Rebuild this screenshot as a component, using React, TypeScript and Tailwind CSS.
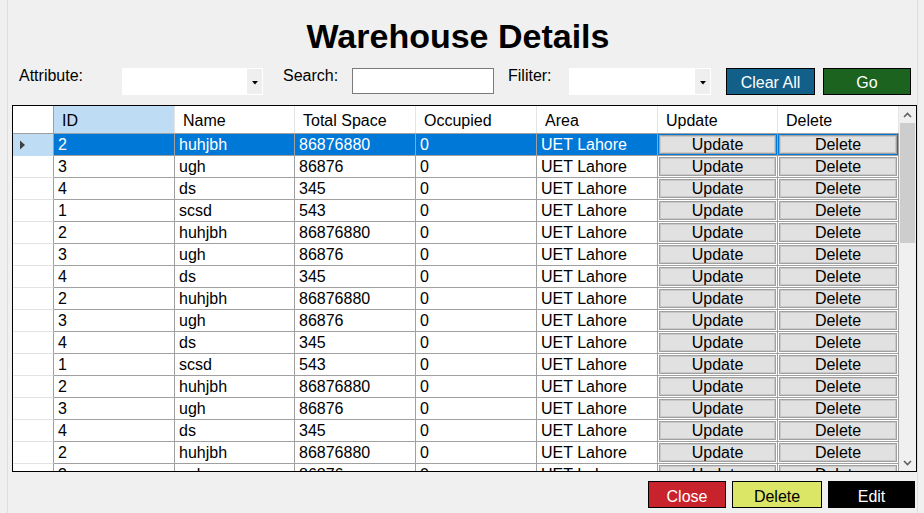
import React from "react";

const rows: [string, string, string][] = [
  ["2", "huhjbh", "86876880"],
  ["3", "ugh", "86876"],
  ["4", "ds", "345"],
  ["1", "scsd", "543"],
  ["2", "huhjbh", "86876880"],
  ["3", "ugh", "86876"],
  ["4", "ds", "345"],
  ["2", "huhjbh", "86876880"],
  ["3", "ugh", "86876"],
  ["4", "ds", "345"],
  ["1", "scsd", "543"],
  ["2", "huhjbh", "86876880"],
  ["3", "ugh", "86876"],
  ["4", "ds", "345"],
  ["2", "huhjbh", "86876880"],
  ["3", "ugh", "86876"],
];

const DropArrow = () => (
  <svg width="6" height="4" viewBox="0 0 6 4">
    <polygon points="0,0 6,0 3,3.5" fill="#000" />
  </svg>
);

const Combo = ({ w }: { w: string }) => (
  <div className={`${w} h-[27px] bg-white border border-white flex justify-end`}>
    <div className="w-[15px] h-full bg-[#efefef] flex items-center justify-center pt-[2px]">
      <DropArrow />
    </div>
  </div>
);

export default function App() {
  const dataCell = "border-r border-b border-[#a0a0a0] flex items-center pl-[4px] pt-[1px] whitespace-nowrap overflow-hidden";
  return (
    <div className="w-[924px] h-[513px] bg-[#f0f0f0] overflow-hidden text-black font-['Liberation_Sans',Arial,sans-serif] text-[16px]">
      <div className="ml-[7px] w-[911px] h-full border-x border-[#dedede] flex flex-col">
        {/* Title */}
        <div className="mt-[19px] h-[34px] leading-[34px] text-[34px] font-bold text-center pr-[9px] shrink-0">
          Warehouse Details
        </div>

        {/* Controls */}
        <div className="mt-[15px] flex h-[27px] items-start shrink-0">
          <div className="ml-[11px] w-[103px] leading-[14px] mt-[1px]">Attribute:</div>
          <Combo w="w-[141px]" />
          <div className="ml-[20px] w-[69px] leading-[14px] mt-[1px]">Search:</div>
          <div className="w-[142px] h-[26px] bg-white border border-[#7a7a7a]" />
          <div className="ml-[14px] w-[61px] leading-[14px] mt-[1px]">Filiter:</div>
          <Combo w="w-[142px]" />
          <div className="ml-[15px] w-[89px] h-[27px] bg-[#125f8a] border border-black text-white flex items-center justify-center pt-[3px]">
            Clear All
          </div>
          <div className="ml-[8px] w-[88px] h-[27px] bg-[#1b631e] border border-black text-white flex items-center justify-center pt-[3px]">
            Go
          </div>
        </div>

        {/* Grid */}
        <div className="mt-[10px] ml-[4px] w-[905px] h-[367px] border border-black bg-white flex overflow-hidden shrink-0">
          <div className="w-[886px] flex flex-col overflow-hidden">
            {/* Header */}
            <div className="flex h-[28px] shrink-0 border-b border-[#a0a0a0]">
              <div className="w-[41px] border-r border-[#a0a0a0] bg-white" />
              <div className="w-[121px] border-r border-[#e5e5e5] bg-[#bedcf4] flex items-center pl-[8px] pt-[3px]">ID</div>
              <div className="w-[120px] border-r border-[#e5e5e5] flex items-center pl-[8px] pt-[3px]">Name</div>
              <div className="w-[121px] border-r border-[#e5e5e5] flex items-center pl-[8px] pt-[3px]">Total Space</div>
              <div className="w-[121px] border-r border-[#e5e5e5] flex items-center pl-[8px] pt-[3px]">Occupied</div>
              <div className="w-[121px] border-r border-[#e5e5e5] flex items-center pl-[8px] pt-[3px]">Area</div>
              <div className="w-[120px] border-r border-[#e5e5e5] flex items-center pl-[8px] pt-[3px]">Update</div>
              <div className="w-[121px] border-r border-[#e5e5e5] flex items-center pl-[8px] pt-[3px]">Delete</div>
            </div>
            {/* Rows */}
            {rows.map((r, i) => {
              const sel = i === 0;
              const bg = sel ? "bg-[#0078d7] text-white" : "bg-white";
              return (
                <div key={i} className="flex h-[22px] shrink-0">
                  <div className={`w-[41px] border-r border-[#a0a0a0] border-b ${sel ? "bg-[#bedcf4] border-b-[#bedcf4]" : "bg-white border-b-[#e3e3e3]"} flex items-center pl-[7px]`}>
                    {sel && (
                      <svg width="6" height="10" viewBox="0 0 6 10">
                        <polygon points="0,0.5 5,5 0,9.5" fill="#404040" />
                      </svg>
                    )}
                  </div>
                  <div className={`w-[121px] ${dataCell} ${bg}`}>{r[0]}</div>
                  <div className={`w-[120px] ${dataCell} ${bg}`}>{r[1]}</div>
                  <div className={`w-[121px] ${dataCell} ${bg}`}>{r[2]}</div>
                  <div className={`w-[121px] ${dataCell} ${bg}`}>0</div>
                  <div className={`w-[121px] ${dataCell} ${bg}`}>UET Lahore</div>
                  <div className={`w-[120px] border-r border-b border-[#a0a0a0] p-[1px] ${sel ? "bg-[#0078d7]" : "bg-white"}`}>
                    <div className="h-full bg-[#e1e1e1] border border-[#a0a0a0] shadow-[inset_0_0_0_1px_#c9c9c9] flex items-center justify-center pt-[1px] text-black">
                      Update
                    </div>
                  </div>
                  <div className={`w-[121px] border-r border-b border-[#a0a0a0] p-[1px] ${sel ? "bg-[#0078d7]" : "bg-white"}`}>
                    <div className="h-full bg-[#e1e1e1] border border-[#a0a0a0] shadow-[inset_0_0_0_1px_#c9c9c9] flex items-center justify-center pt-[1px] text-black">
                      Delete
                    </div>
                  </div>
                </div>
              );
            })}
          </div>
          {/* Scrollbar */}
          <div className="w-[17px] bg-[#f0f0f0] flex flex-col">
            <div className="h-[17px] flex items-center justify-center shrink-0">
              <svg width="9" height="6" viewBox="0 0 9 6">
                <polyline points="1,5 4.5,1.5 8,5" fill="none" stroke="#606060" strokeWidth="1.6" />
              </svg>
            </div>
            <div className="mx-[1px] h-[120px] bg-[#cdcdcd] shrink-0" />
            <div className="flex-1" />
            <div className="h-[17px] flex items-center justify-center shrink-0">
              <svg width="9" height="6" viewBox="0 0 9 6">
                <polyline points="1,1 4.5,4.5 8,1" fill="none" stroke="#606060" strokeWidth="1.6" />
              </svg>
            </div>
          </div>
        </div>

        {/* Bottom buttons */}
        <div className="mt-[9px] flex h-[27px] shrink-0">
          <div className="ml-[640px] w-[78px] h-[27px] bg-[#c8232c] border border-black text-white flex items-center justify-center pt-[4px]">
            Close
          </div>
          <div className="ml-[6px] w-[90px] h-[27px] bg-[#dbe566] border border-black text-black flex items-center justify-center pt-[4px]">
            Delete
          </div>
          <div className="ml-[6px] w-[87px] h-[27px] bg-black border border-black text-white flex items-center justify-center pt-[4px]">
            Edit
          </div>
        </div>
      </div>
    </div>
  );
}
